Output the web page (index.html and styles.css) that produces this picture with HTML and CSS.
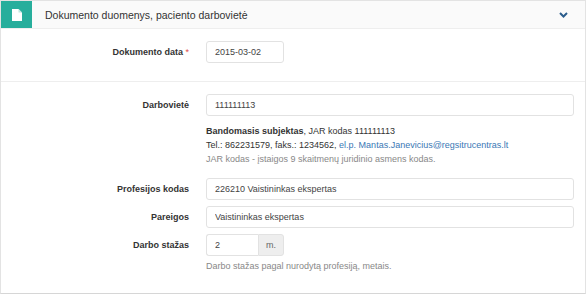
FILE: index.html
```html
<!DOCTYPE html>
<html lang="lt">
<head>
    <meta charset="UTF-8">
    <title>Dokumento duomenys</title>
    <link rel="stylesheet" href="styles.css">
</head>
<body>
    <div class="panel">
        <div class="panel-heading">
            <div class="panel-icon">
                <svg width="10" height="12" viewBox="0 0 10 12">
                    <path d="M0 0 H6.5 L10 3.5 V12 H0 Z" fill="#fff"/>
                    <path d="M6.5 0 V3.5 H10 Z" fill="#bfe6e0"/>
                </svg>
            </div>
            <div class="panel-title">Dokumento duomenys, paciento darbovietė</div>
            <svg class="chevron" width="9" height="6" viewBox="0 0 9 6">
                <path d="M1 1 L4.5 4.5 L8 1" fill="none" stroke="#2b5d8c" stroke-width="2"/>
            </svg>
        </div>

        <div class="section">
            <div class="form-row">
                <label class="form-label">Dokumento data <span class="req">*</span></label>
                <div class="form-field">
                    <input class="input input-date" type="text" value="2015-03-02">
                </div>
            </div>
        </div>

        <div class="section section-last">
            <div class="form-row">
                <label class="form-label">Darbovietė</label>
                <div class="form-field">
                    <input class="input" type="text" value="111111113">
                </div>
            </div>
            <div class="form-row info-row">
                <div class="form-label"></div>
                <div class="form-field info">
                    <div><b>Bandomasis subjektas</b>, JAR kodas 111111113</div>
                    <div>Tel.: 862231579, faks.: 1234562, <a href="#">el.p. Mantas.Janevicius@regsitrucentras.lt</a></div>
                    <div class="help">JAR kodas - įstaigos 9 skaitmenų juridinio asmens kodas.</div>
                </div>
            </div>
            <div class="form-row">
                <label class="form-label">Profesijos kodas</label>
                <div class="form-field">
                    <input class="input" type="text" value="226210 Vaistininkas ekspertas">
                </div>
            </div>
            <div class="form-row">
                <label class="form-label">Pareigos</label>
                <div class="form-field">
                    <input class="input" type="text" value="Vaistininkas ekspertas">
                </div>
            </div>
            <div class="form-row">
                <label class="form-label">Darbo stažas</label>
                <div class="form-field">
                    <div class="input-group">
                        <input class="input input-short" type="text" value="2">
                        <span class="addon">m.</span>
                    </div>
                </div>
            </div>
            <div class="form-row help-row">
                <div class="form-label"></div>
                <div class="form-field help">Darbo stažas pagal nurodytą profesiją, metais.</div>
            </div>
        </div>
    </div>
</body>
</html>
```

FILE: styles.css
```css
body {
    margin: 0;
    font-family: "Liberation Sans", Arial, sans-serif;
    font-size: 9px;
    color: #333;
    background-color: #fff;
}
.panel {
    width: 586px;
    border: 1px solid #e3e3e3;
    border-bottom-color: #d6d6d6;
    box-sizing: border-box;
}
.panel-heading {
    display: flex;
    align-items: center;
    height: 27px;
    background-color: #fafafa;
    border-bottom: 1px solid #eee;
}
.panel-icon {
    width: 31px;
    height: 27px;
    background-color: #27ae9c;
    display: flex;
    align-items: center;
    justify-content: center;
}
.panel-title {
    flex: 1;
    margin-left: 13px;
    font-size: 10.5px;
    color: #333;
}
.chevron {
    margin-right: 17px;
}
.section {
    padding: 12px 0 12px;
    border-bottom: 1px solid #eee;
}
.section-last {
    border-bottom: none;
    padding-bottom: 20px;
}
.form-row {
    display: flex;
    align-items: center;
    margin-bottom: 6px;
}
.form-label {
    width: 188px;
    flex: none;
    text-align: right;
    font-weight: bold;
    color: #333;
}
.req {
    color: #e04b4b;
    font-weight: normal;
}
.form-field {
    flex: 1;
    margin-left: 17px;
    margin-right: 11px;
}
.input {
    display: block;
    box-sizing: border-box;
    width: 100%;
    height: 22px;
    padding: 0 8px;
    border: 1px solid #e2e2e2;
    border-radius: 3px;
    font-family: inherit;
    font-size: 9px;
    color: #444;
    background-color: #fff;
}
.input-date {
    width: 78px;
}
.input-group {
    display: flex;
}
.input-short {
    width: 52px;
    border-radius: 3px 0 0 3px;
    border-right: none;
}
.addon {
    width: 26px;
    height: 22px;
    box-sizing: border-box;
    display: flex;
    align-items: center;
    justify-content: center;
    background-color: #eee;
    border: 1px solid #e2e2e2;
    border-radius: 0 3px 3px 0;
    color: #666;
}
.info-row {
    margin-top: 8px;
    margin-bottom: 12px;
}
.info {
    line-height: 14px;
}
.info a {
    color: #3a78b5;
    text-decoration: none;
}
.help {
    color: #888;
    font-weight: normal;
    line-height: 14px;
}
.help-row {
    margin-top: -3px;
    margin-bottom: 0;
}
```
